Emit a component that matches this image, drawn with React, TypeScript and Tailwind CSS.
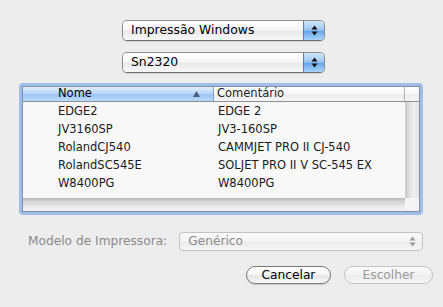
import React from 'react';

const font = "font-['DejaVu_Sans','Liberation_Sans',sans-serif]";

const printers = [
  { name: 'EDGE2', comment: 'EDGE 2' },
  { name: 'JV3160SP', comment: 'JV3-160SP' },
  { name: 'RolandCJ540', comment: 'CAMMJET PRO II CJ-540' },
  { name: 'RolandSC545E', comment: 'SOLJET PRO II V SC-545 EX' },
  { name: 'W8400PG', comment: 'W8400PG' },
];

const Arrows = ({ color }: { color: string }) => (
  <svg width="7" height="11" viewBox="0 0 7 11">
    <path d="M3.5 0.5 L6.5 4.5 L0.5 4.5 Z" fill={color} />
    <path d="M3.5 10.5 L6.5 6.5 L0.5 6.5 Z" fill={color} />
  </svg>
);

const Popup = ({ label }: { label: string }) => (
  <div className="ml-[122px] flex h-[21px] w-[203px] overflow-hidden rounded-[5px] border border-[#8c8c8c] border-b-[#6f6f6f] shadow-[0_1px_1px_rgba(0,0,0,0.12)]">
    <div className="flex flex-1 items-center bg-[linear-gradient(to_bottom,#ffffff_0%,#f6f6f6_45%,#e9e9e9_55%,#f8f8f8_100%)] pl-[8px] text-[12.4px] text-black">
      {label}
    </div>
    <div className="flex w-[21px] items-center justify-center border-l border-[#5a7fb0] bg-[linear-gradient(to_bottom,#d2e6fb_0%,#9cc7f3_45%,#6aa8ec_55%,#a8d2fa_100%)]">
      <Arrows color="#111" />
    </div>
  </div>
);

export default function App() {
  return (
    <div className={`flex h-[307px] w-[443px] flex-col bg-[#ededed] ${font}`}>
      <div className="mt-[20px]">
        <Popup label="Impressão Windows" />
      </div>
      <div className="mt-[11px]">
        <Popup label="Sn2320" />
      </div>

      {/* list with focus ring */}
      <div className="ml-[19px] mt-[10px] h-[132px] w-[404px] rounded-[4px] bg-[#9fc0e6] p-[3px]">
        <div className="flex h-full flex-col border border-[#7e8fa6] bg-[#f8f8f8]">
          <div className="flex h-[15px] border-b border-[#8f8f8f] text-[11.5px] leading-none">
            <div className="relative flex w-[191px] items-center border-r border-[#8a9fbd] bg-[linear-gradient(to_bottom,#e2eefc_0%,#bcd8f7_45%,#9dc6f3_55%,#b9dafc_100%)] pl-[35px] text-black">
              Nome
              <svg className="absolute right-[13px] top-[4px]" width="7" height="6" viewBox="0 0 7 6">
                <path d="M3.5 0 L7 6 L0 6 Z" fill="#4c5f78" />
              </svg>
            </div>
            <div className="flex w-[191px] items-center border-r border-[#b5b5b5] bg-[linear-gradient(to_bottom,#ffffff_0%,#f7f7f7_50%,#ececec_55%,#f5f5f5_100%)] pl-[3px] text-[#222]">
              Comentário
            </div>
            <div className="flex-1 bg-[linear-gradient(to_bottom,#ffffff_0%,#f7f7f7_50%,#ececec_55%,#f5f5f5_100%)]" />
          </div>
          <div className="flex flex-1">
            <div className="flex w-[382px] flex-col">
              <div className="flex-1 pt-[1px]">
                {printers.map((p) => (
                  <div key={p.name} className="flex h-[18px] items-center text-[11.5px] text-[#1a1a1a]">
                    <div className="w-[192px] pl-[35px]">{p.name}</div>
                    <div className="pl-[3px]">{p.comment}</div>
                  </div>
                ))}
              </div>
              <div className="h-[13px] bg-[linear-gradient(to_bottom,#b9b9b9_0%,#d6d6d6_30%,#ebebeb_70%,#f2f2f2_100%)]" />
            </div>
            <div className="flex flex-1 flex-col">
              <div className="flex-1 bg-[linear-gradient(to_right,#c9c9c9_0%,#dedede_30%,#f0f0f0_60%,#e4e4e4_100%)]" />
              <div className="h-[13px] bg-[#f4f4f4]" />
            </div>
          </div>
        </div>
      </div>

      <div className="mt-[17px] flex items-center pl-[28px] text-[12.2px]">
        <span className="text-[#8a8a8a]">Modelo de Impressora:</span>
        <div className="ml-[12px] flex h-[19px] w-[244px] items-center justify-between rounded-[4px] border border-[#c2c2c2] bg-[linear-gradient(to_bottom,#fafafa_0%,#f3f3f3_50%,#ebebeb_55%,#f5f5f5_100%)] pl-[8px] pr-[6px] text-[#8a8a8a]">
          <span>Genérico</span>
          <Arrows color="#9a9a9a" />
        </div>
      </div>

      <div className="mt-[15px] flex justify-end gap-[13px] pr-[10px] text-[12.2px]">
        <div className="flex h-[18px] w-[85px] items-center justify-center rounded-full border border-[#7a7a7a] bg-[linear-gradient(to_bottom,#ffffff_0%,#f6f6f6_45%,#e6e6e6_55%,#f9f9f9_100%)] text-black shadow-[0_1px_1px_rgba(0,0,0,0.15)]">
          Cancelar
        </div>
        <div className="flex h-[18px] w-[89px] items-center justify-center rounded-full border border-[#c4c4c4] bg-[linear-gradient(to_bottom,#fbfbfb_0%,#f4f4f4_45%,#ececec_55%,#f6f6f6_100%)] text-[#9a9a9a]">
          Escolher
        </div>
      </div>
    </div>
  );
}
